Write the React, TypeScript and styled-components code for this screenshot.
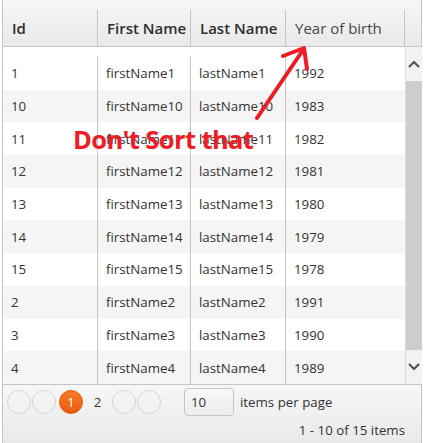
import React from 'react';
import styled, {createGlobalStyle} from "styled-components";

const GlobalStyle = createGlobalStyle`
    html, body {
        margin: 0;
        padding: 0;
        background: #ffffff;
    }
    body {
        font-family: "Open Sans", "Noto Sans", sans-serif;
        color: #333;
    }
`

type Person = { id: number; first: string; last: string; year: number };

const people: Person[] = [
    {id: 1, first: 'firstName1', last: 'lastName1', year: 1992},
    {id: 10, first: 'firstName10', last: 'lastName10', year: 1983},
    {id: 11, first: 'firstName11', last: 'lastName11', year: 1982},
    {id: 12, first: 'firstName12', last: 'lastName12', year: 1981},
    {id: 13, first: 'firstName13', last: 'lastName13', year: 1980},
    {id: 14, first: 'firstName14', last: 'lastName14', year: 1979},
    {id: 15, first: 'firstName15', last: 'lastName15', year: 1978},
    {id: 2, first: 'firstName2', last: 'lastName2', year: 1991},
    {id: 3, first: 'firstName3', last: 'lastName3', year: 1990},
    {id: 4, first: 'firstName4', last: 'lastName4', year: 1989},
];

const widths = [95, 93, 95, 119];

export default function App() {
    return (
        <>
            <GlobalStyle/>
            <Page>
                <Grid>
                    <Header>
                        <HeaderCell $w={widths[0]} $strong>Id</HeaderCell>
                        <HeaderCell $w={widths[1]} $strong>First Name</HeaderCell>
                        <HeaderCell $w={widths[2]} $strong>Last Name</HeaderCell>
                        <HeaderCell $w={widths[3]}>Year of birth</HeaderCell>
                        <HeaderCell $w={17}/>
                    </Header>

                    <Body>
                        <Rows>
                            {people.map((p, i) => (
                                <Row key={p.id} $alt={i % 2 === 1}>
                                    <Cell $w={widths[0]}>{p.id}</Cell>
                                    <Cell $w={widths[1]}>{p.first}</Cell>
                                    <Cell $w={widths[2]}>{p.last}</Cell>
                                    <Cell $w={widths[3]} $last>{p.year}</Cell>
                                </Row>
                            ))}
                        </Rows>
                        <ScrollBar>
                            <ScrollArrow>
                                <svg width="12" height="8" viewBox="0 0 12 8">
                                    <path d="M1 7 L6 2 L11 7" fill="none" stroke="#555" strokeWidth="2.2"/>
                                </svg>
                            </ScrollArrow>
                            <Thumb/>
                            <ScrollArrow>
                                <svg width="12" height="8" viewBox="0 0 12 8">
                                    <path d="M1 1 L6 6 L11 1" fill="none" stroke="#555" strokeWidth="2.2"/>
                                </svg>
                            </ScrollArrow>
                        </ScrollBar>
                    </Body>

                    <Pager>
                        <PagerTop>
                            <PageNav>
                                <PageCircle/>
                                <PageCircle/>
                                <PageCircle $active>1</PageCircle>
                                <PageNumber>2</PageNumber>
                                <PageCircle/>
                                <PageCircle/>
                            </PageNav>
                            <PageSize>10</PageSize>
                            <PagerLabel>items per page</PagerLabel>
                        </PagerTop>
                        <PagerInfo>1 - 10 of 15 items</PagerInfo>
                    </Pager>

                    <Note>Don't Sort that</Note>
                    <Arrow width="70" height="90" viewBox="0 0 70 90">
                        <path d="M10 76 L56 8" stroke="#ee1c25" strokeWidth="4" strokeLinecap="round" fill="none"/>
                        <path d="M36 14 L57 6 L60 27" stroke="#ee1c25" strokeWidth="4" strokeLinecap="round"
                              strokeLinejoin="round" fill="none"/>
                    </Arrow>
                </Grid>
            </Page>
        </>
    );
}

const Page = styled.div`
    padding-left: 2px;
`

const Grid = styled.div`
    position: relative;
    width: 420px;
    border-left: 1px solid #c5c5c5;
    border-right: 1px solid #c5c5c5;
    box-sizing: border-box;
`

const Header = styled.div`
    display: flex;
    padding-top: 10px;
    background: linear-gradient(#f6f6f6, #e9e9e9);
    border-bottom: 1px solid #c5c5c5;
`

const HeaderCell = styled.div<{ $w: number; $strong?: boolean }>`
    box-sizing: border-box;
    width: ${p => p.$w}px;
    flex: none;
    height: 36px;
    padding: 0 9px;
    display: flex;
    align-items: center;
    border-right: 1px solid #c5c5c5;
    font-size: 15px;
    font-weight: ${p => p.$strong ? 600 : 400};
    color: ${p => p.$strong ? '#2e2e2e' : '#474747'};
    white-space: nowrap;
    overflow: hidden;

    &:last-child {
        border-right: none;
    }
`

const Body = styled.div`
    display: flex;
    height: 337px;
`

const Rows = styled.div`
    padding-top: 10px;
    width: 402px;
`

const Row = styled.div<{ $alt: boolean }>`
    display: flex;
    height: 32.7px;
    background: ${p => p.$alt ? '#f5f5f5' : '#ffffff'};
`

const Cell = styled.div<{ $w: number; $last?: boolean }>`
    box-sizing: border-box;
    width: ${p => p.$w}px;
    flex: none;
    padding: 0 8px;
    display: flex;
    align-items: center;
    border-right: ${p => p.$last ? 'none' : '1px solid #c5c5c5'};
    font-size: 13.3px;
    color: #333;
    white-space: nowrap;
`

const ScrollBar = styled.div`
    width: 17px;
    flex: none;
    box-sizing: border-box;
    border-left: 1px solid #dcdcdc;
    background: #f2f2f2;
    display: flex;
    flex-direction: column;
    align-items: stretch;
`

const ScrollArrow = styled.div`
    height: 34px;
    display: flex;
    align-items: center;
    justify-content: center;
`

const Thumb = styled.div`
    flex: 1;
    background: #cdcdcd;
`

const Pager = styled.div`
    height: 59px;
    box-sizing: border-box;
    border-top: 1px solid #c5c5c5;
    background: linear-gradient(#f7f7f7, #e9e9e9);
    padding: 4px 0 0 4px;
`

const PagerTop = styled.div`
    display: flex;
    align-items: center;
    height: 26px;
`

const PageNav = styled.div`
    display: flex;
    align-items: center;
    gap: 1px;
`

const PageCircle = styled.span<{ $active?: boolean }>`
    box-sizing: border-box;
    width: 24px;
    height: 24px;
    border-radius: 50%;
    border: 1px solid ${p => p.$active ? '#e65a0a' : '#d5d5d5'};
    background: ${p => p.$active ? 'linear-gradient(#f77a2a, #ea5b0c)' : 'transparent'};
    color: #fff;
    font-size: 13px;
    display: flex;
    align-items: center;
    justify-content: center;
    margin-left: ${p => p.$active ? '2px' : '0'};
`

const PageNumber = styled.span`
    width: 27px;
    text-align: center;
    font-size: 13.3px;
    color: #333;
`

const PageSize = styled.div`
    box-sizing: border-box;
    width: 50px;
    height: 28px;
    margin-left: 23px;
    border: 1px solid #c5c5c5;
    border-radius: 4px;
    background: linear-gradient(#f8f8f8, #ececec);
    padding-left: 6px;
    display: flex;
    align-items: center;
    font-size: 13.3px;
    color: #333;
`

const PagerLabel = styled.span`
    margin-left: 6px;
    font-size: 13.3px;
    color: #333;
`

const PagerInfo = styled.div`
    text-align: right;
    padding-right: 16px;
    margin-top: 6px;
    font-size: 13.3px;
    color: #333;
`

const Note = styled.div`
    position: absolute;
    left: 70px;
    top: 122px;
    font-size: 25.5px;
    font-weight: 700;
    color: #ee1c25;
    white-space: nowrap;
    letter-spacing: -0.6px;
`

const Arrow = styled.svg`
    position: absolute;
    left: 244px;
    top: 42px;
`
